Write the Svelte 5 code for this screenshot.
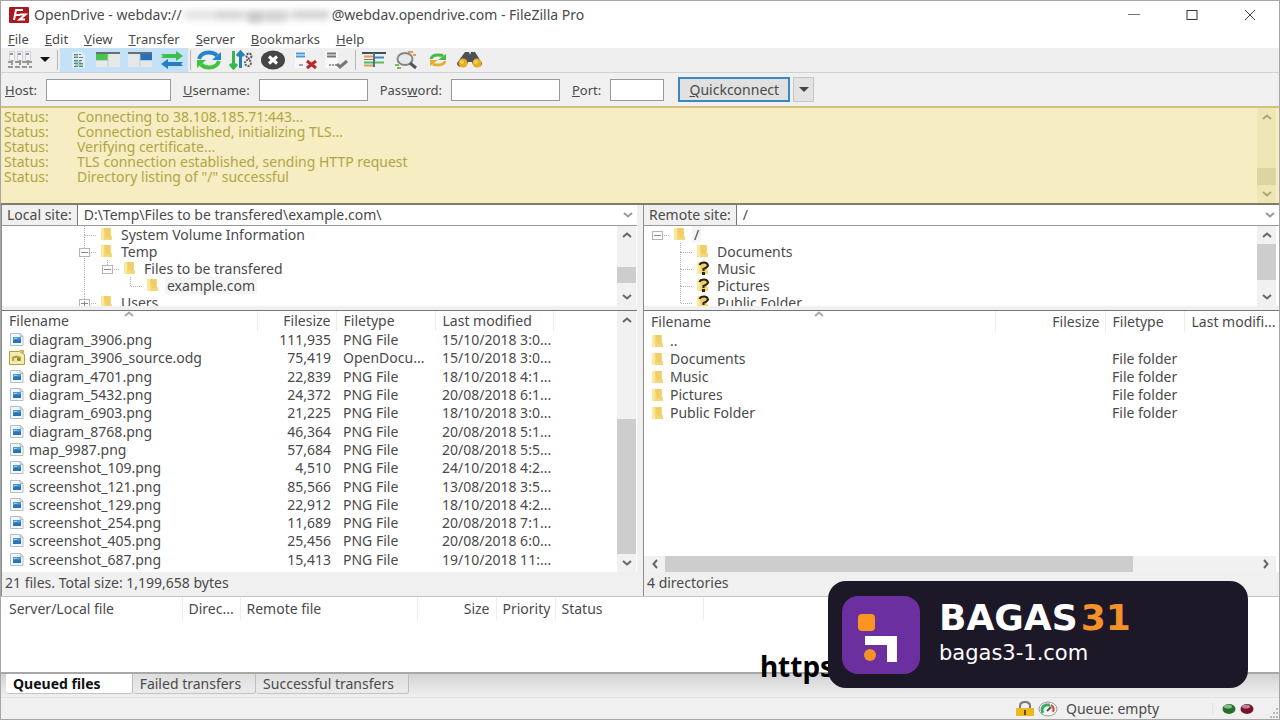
<script>
  const menus = ['File', 'Edit', 'View', 'Transfer', 'Server', 'Bookmarks', 'Help'];

  const log = [
    'Connecting to 38.108.185.71:443...',
    'Connection established, initializing TLS...',
    'Verifying certificate...',
    'TLS connection established, sending HTTP request',
    'Directory listing of "/" successful'
  ];

  // open: '-' expanded, '+' collapsed; up/down: connector line above/below the row
  const localTree = [
    { name: 'System Volume Information', depth: 0, up: true, down: true },
    { name: 'Temp', depth: 0, open: '-', up: true, down: true },
    { name: 'Files to be transfered', depth: 1, open: '-', up: true, parent: true },
    { name: 'example.com', depth: 2, up: true, parent: true, selected: true },
    { name: 'Users', depth: 0, open: '+', up: true }
  ];

  const remoteTree = [
    { name: '/', depth: 0, open: '-', selected: true },
    { name: 'Documents', depth: 1, up: true, down: true },
    { name: 'Music', depth: 1, up: true, down: true, unknown: true },
    { name: 'Pictures', depth: 1, up: true, down: true, unknown: true },
    { name: 'Public Folder', depth: 1, up: true, unknown: true }
  ];

  const localFiles = [
    ['diagram_3906.png', '111,935', 'PNG File', '15/10/2018 3:0...'],
    ['diagram_3906_source.odg', '75,419', 'OpenDocu...', '15/10/2018 3:0...'],
    ['diagram_4701.png', '22,839', 'PNG File', '18/10/2018 4:1...'],
    ['diagram_5432.png', '24,372', 'PNG File', '20/08/2018 6:1...'],
    ['diagram_6903.png', '21,225', 'PNG File', '18/10/2018 3:0...'],
    ['diagram_8768.png', '46,364', 'PNG File', '20/08/2018 5:1...'],
    ['map_9987.png', '57,684', 'PNG File', '20/08/2018 5:5...'],
    ['screenshot_109.png', '4,510', 'PNG File', '24/10/2018 4:2...'],
    ['screenshot_121.png', '85,566', 'PNG File', '13/08/2018 3:5...'],
    ['screenshot_129.png', '22,912', 'PNG File', '18/10/2018 4:2...'],
    ['screenshot_254.png', '11,689', 'PNG File', '20/08/2018 7:1...'],
    ['screenshot_405.png', '25,456', 'PNG File', '20/08/2018 6:0...'],
    ['screenshot_687.png', '15,413', 'PNG File', '19/10/2018 11:...']
  ];

  const remoteFiles = ['..', 'Documents', 'Music', 'Pictures', 'Public Folder'];
  const tabs = ['Queued files', 'Failed transfers', 'Successful transfers'];

  let activeTab = $state('Queued files');
  let host = $state('');
  let username = $state('');
  let password = $state('');
  let port = $state('');
</script>

{#snippet chevron(dir)}
  <svg class="chevron {dir}" width="12" height="12" viewBox="0 0 12 12" aria-hidden="true">
    <path d="M2 8 L6 4.500 L10 8" fill="none" stroke="currentColor" stroke-width="2" />
  </svg>
{/snippet}

{#snippet scrollbar(before, thumb, after, horizontal = false)}
  <div class="scrollbar" class:horizontal>
    <button type="button" aria-label="Scroll back">{@render chevron(horizontal ? 'left' : 'up')}</button>
    <span style:flex-grow={before}></span>
    <span class="thumb" style:flex-grow={thumb}></span>
    <span style:flex-grow={after}></span>
    <button type="button" aria-label="Scroll forward">{@render chevron(horizontal ? 'right' : 'down')}</button>
  </div>
{/snippet}

{#snippet folder(unknown = false)}
  <svg class="icon" width="13" height="15" viewBox="0 0 13 15" aria-hidden="true">
    <path d="M1 1h10v8l1 .5V13H1z" fill="#f3d877" />
    <path d="M4 1h6v9H6z" fill="#f0cd69" />
    <path d="M1 1h3v12H1z" fill="#fae7a0" />
    {#if unknown}
      <path d="M3.500 4Q4.500 1.500 8 1.500T12 4.500Q11.500 6.500 7.500 8V10" fill="none" stroke="#28240f" stroke-width="2" />
      <rect x="6" y="11" width="3" height="3" fill="#28240f" />
    {/if}
  </svg>
{/snippet}

{#snippet fileIcon(name)}
  {#if name.endsWith('.odg')}
    <svg class="icon" width="16" height="16" viewBox="0 0 16 16" aria-hidden="true">
      <path d="M.5 1.500h10l5 3v10H.500z" fill="#f3ecb9" stroke="#b89a4c" />
      <path d="M10 0h5v5z" fill="#d4b94b" />
      <path d="M3 7q4-3 9 0v4H3z" fill="#b9a23d" />
      <path d="M5 12V8h3v4z" fill="#eee79b" />
      <circle cx="9.500" cy="9" r="1.500" fill="#7f8a32" />
    </svg>
  {:else}
    <svg class="icon" width="16" height="16" viewBox="0 0 16 16" aria-hidden="true">
      <path d="M1.500 1.500h10l2.500 2.500v9.500H1.500z" fill="#f2f7fb" stroke="#b4bec8" />
      <path d="M11 1.500V4.500h3" fill="#dce3e9" stroke="#b4bec8" />
      <rect x="4" y="5" width="8" height="6" fill="#4a9ad8" />
      <path d="M4 9l3-2 2 1 3-1v4H4z" fill="#2b73b3" />
      <path d="M5 6h3v1H5z" fill="#9dd4f6" />
    </svg>
  {/if}
{/snippet}

{#snippet tree(rows)}
  <ul class="tree">
    {#each rows as row}
      <li style:padding-left="{row.depth * 23}px">
        <svg class="guide" width="24" height="17" viewBox="0 0 24 17" aria-hidden="true">
          <g stroke="#b4b4b4" stroke-dasharray="1 1">
            {#if row.up}<path d="M8.500 0V9" />{/if}
            {#if row.down}<path d="M8.500 9V17" />{/if}
            {#if row.parent}<path d="M{8.5 - row.depth * 23} 0V17" />{/if}
            <path d="M9 9.500H21" />
          </g>
          {#if row.open}
            <rect x="3.500" y="5.500" width="10" height="8" fill="#fff" stroke="#b4b4b4" />
            <path d="M5 9.500h7" stroke="#88888f" />
            {#if row.open === '+'}<path d="M8.500 7v5" stroke="#88888f" />{/if}
          {/if}
        </svg>
        {@render folder(row.unknown)}
        <span class="node" class:selected={row.selected}>{row.name}</span>
      </li>
    {/each}
  </ul>
{/snippet}

<div class="window">
  <header class="titlebar">
    <svg width="20" height="16" viewBox="0 0 20 16" aria-hidden="true">
      <rect width="20" height="16" rx="1" fill="#a9191f" />
      <path d="M5 13L7 3h7M6 8h5" fill="none" stroke="#fff" stroke-width="2" />
      <path d="M10.500 7.500h6l-6 5h5.500" fill="none" stroke="#fff" stroke-width="2" />
    </svg>
    <h1>
      OpenDrive - webdav://<svg class="redacted" width="150" height="18" viewBox="0 0 150 18" aria-hidden="true">
        <g fill="#c4c4c4">
          <rect x="2" y="4" width="146" height="10" opacity=".45" />
          <rect x="34" y="5" width="26" height="9" opacity=".4" />
          <rect x="66" y="5" width="14" height="12" opacity=".9" />
          <rect x="82" y="5" width="22" height="11" opacity=".6" />
          <rect x="112" y="4" width="34" height="9" opacity=".5" />
        </g>
      </svg>@webdav.opendrive.com - FileZilla Pro
    </h1>
    <div class="controls">
      <button type="button" aria-label="Minimize">
        <svg width="14" height="14" viewBox="0 0 14 14"><path d="M1 6.500h12" stroke="#777" /></svg>
      </button>
      <button type="button" aria-label="Maximize">
        <svg width="14" height="14" viewBox="0 0 14 14"><rect x="2" y="2.500" width="10" height="9" fill="none" stroke="#333" /></svg>
      </button>
      <button type="button" aria-label="Close">
        <svg width="14" height="14" viewBox="0 0 14 14"><path d="M2 2l10 10M12 2L2 12" stroke="#444" /></svg>
      </button>
    </div>
  </header>

  <nav class="menubar">
    {#each menus as menu}
      <button type="button"><u>{menu[0]}</u>{menu.slice(1)}</button>
    {/each}
  </nav>

  <div class="toolbar">
    <button type="button" class="wide" aria-label="Site Manager">
      <svg width="26" height="20" viewBox="0 0 26 20">
        <g fill="#f4f4f4" stroke="#cfcfcf">
          <path d="M2.500 1.500h5v9h-5zM10.500 1.500h5v9h-5zM18.500 1.500h5v9h-5z" />
        </g>
        <path d="M3 4h3M11 4h3M19 4h3" stroke="#8290c8" stroke-width="2" />
        <path d="M5 10v6M13 10v6M21 10v6M1 12h24M1 17h24" stroke="#979797" stroke-width="2" stroke-dasharray="5 2" />
      </svg>
    </button>
    <button type="button" class="drop" aria-label="Recent sites">
      <svg width="10" height="6" viewBox="0 0 10 6"><path d="M0 0h10L5 5z" fill="#111" /></svg>
    </button>
    <span class="separator"></span>
    <button type="button" class="pressed" aria-label="Toggle message log">
      <svg width="26" height="20" viewBox="0 0 26 20">
        <path d="M9 2h10l3 3v13H9z" fill="#dfeef3" />
        <path d="M11 4.500h7M11 7.500h10M11 10.500h8M11 13.500h10M11 16.500h9" stroke="#607f91" stroke-dasharray="4 1" />
        <path d="M11 6h4M11 12h7M12 15h8" stroke="#58a46c" />
      </svg>
    </button>
    <button type="button" class="pressed" aria-label="Toggle local tree">
      <svg width="26" height="20" viewBox="0 0 26 20">
        <rect x="1" y="2" width="24" height="15" fill="#e7e9e7" />
        <path d="M1 3h24" stroke="#667079" stroke-width="2" />
        <rect x="1" y="4" width="12" height="6" fill="#47c64b" />
        <path d="M13 5v12M1 10.500h12" stroke="#bfcbd1" />
      </svg>
    </button>
    <button type="button" class="pressed" aria-label="Toggle remote tree">
      <svg width="26" height="20" viewBox="0 0 26 20">
        <rect x="1" y="2" width="24" height="15" fill="#e5e8eb" />
        <path d="M1 3h24" stroke="#667079" stroke-width="2" />
        <rect x="13" y="4" width="12" height="6" fill="#2273b9" />
        <path d="M13 5v12M13 10.500h12" stroke="#bfcbd1" />
      </svg>
    </button>
    <button type="button" class="pressed" aria-label="Toggle transfer queue">
      <svg width="26" height="20" viewBox="0 0 26 20">
        <path d="M2 4h15V1l7 5-7 5V8H2l2-2z" fill="#3abf4a" />
        <path d="M24 12H9V9l-7 5 7 5v-3h15l-2-2z" fill="#237fc5" />
      </svg>
    </button>
    <span class="separator"></span>
    <button type="button" aria-label="Refresh">
      <svg width="26" height="20" viewBox="0 0 26 20">
        <path d="M3 9Q5 2.500 13 2.500q5 0 8 3" fill="none" stroke="#2383cb" stroke-width="4" />
        <path d="M25 2v8h-9z" fill="#2383cb" />
        <path d="M23 11q-2 6.500-10 6.500-5 0-8-3" fill="none" stroke="#3fc43d" stroke-width="4" />
        <path d="M1 18v-8h9z" fill="#3fc43d" />
      </svg>
    </button>
    <button type="button" aria-label="Process queue">
      <svg width="26" height="20" viewBox="0 0 26 20">
        <path d="M5.500 1v17M2 14l3.500 4 3.500-4" fill="none" stroke="#36b84a" stroke-width="3" />
        <path d="M12.500 18V2M9 6l3.500-4 3.500 4" fill="none" stroke="#297fb8" stroke-width="3" />
        <circle cx="21" cy="6" r="2.500" fill="none" stroke="#555" stroke-width="2" stroke-dasharray="2 1" />
        <circle cx="20" cy="13" r="3" fill="none" stroke="#666" stroke-width="2" stroke-dasharray="2 1" />
      </svg>
    </button>
    <button type="button" aria-label="Cancel operation">
      <svg width="26" height="20" viewBox="0 0 26 20">
        <ellipse cx="13" cy="10" rx="12" ry="9.500" fill="#454545" />
        <path d="M9 6.500l8 7M17 6.500l-8 7" stroke="#fff" stroke-width="3" />
      </svg>
    </button>
    <button type="button" aria-label="Disconnect">
      <svg width="26" height="20" viewBox="0 0 26 20">
        <path d="M3 1h11v17H3z" fill="#f8f8fa" />
        <path d="M4 3.500h9M4 6.500h9" stroke="#4b9bd2" stroke-width="2" />
        <path d="M7 15h4" stroke="#89aac1" stroke-width="2" />
        <path d="M15 11l9 7M24 11l-9 7" stroke="#ba2929" stroke-width="3" />
      </svg>
    </button>
    <button type="button" aria-label="Reconnect">
      <svg width="26" height="20" viewBox="0 0 26 20">
        <path d="M1 1h13v17H1z" fill="#f8f8f8" />
        <path d="M3 3.500h9M3 6.500h9" stroke="#777" stroke-width="2" />
        <path d="M5 15h8" stroke="#999" stroke-width="2" stroke-dasharray="2 1" />
        <path d="M13 14l3 3 7-6" fill="none" stroke="#777" stroke-width="3" />
      </svg>
    </button>
    <span class="separator"></span>
    <button type="button" aria-label="Filename filters">
      <svg width="26" height="20" viewBox="0 0 26 20">
        <path d="M1 3h24" stroke="#3e4f5d" stroke-width="2" />
        <path d="M3 6.500h9M3 15.500h9" stroke="#d1a353" stroke-width="2" />
        <path d="M3 9.500h9" stroke="#c65d55" />
        <path d="M3 12.500h9" stroke="#4abf5d" stroke-width="2" />
        <path d="M13 3v14" stroke="#4d7388" stroke-width="2" />
        <path d="M14 7.500h9" stroke="#4587b8" stroke-width="2" />
        <path d="M14 12.500h9" stroke="#59bd5a" stroke-width="2" />
      </svg>
    </button>
    <button type="button" aria-label="Directory comparison">
      <svg width="26" height="20" viewBox="0 0 26 20">
        <path d="M15 2h5M20 5h3" stroke="#e09e55" stroke-width="2" />
        <path d="M2 15h4M4 18h4" stroke="#79b95c" stroke-width="2" />
        <ellipse cx="12" cy="9" rx="7.500" ry="6" fill="#e6e9eb" stroke="#858585" stroke-width="2" />
        <path d="M17 13l6 5" stroke="#555" stroke-width="3" />
      </svg>
    </button>
    <button type="button" aria-label="Synchronized browsing">
      <svg width="26" height="20" viewBox="0 0 26 20">
        <path d="M6 9q1-4 7-4 4 0 5 1" fill="none" stroke="#48b84b" stroke-width="3" />
        <path d="M21 4v6h-8z" fill="#48b84b" />
        <path d="M20 11q-1 4-7 4-4 0-5-1" fill="none" stroke="#e9ad2c" stroke-width="3" />
        <path d="M5 16v-6h8z" fill="#e9ad2c" />
      </svg>
    </button>
    <button type="button" aria-label="Search files">
      <svg width="26" height="20" viewBox="0 0 26 20">
        <path d="M8 2h4l1 3 1-3h4l7 11q0 4-5 4-4 0-5-5h-4q-1 5-6 5-5 0-5-4z" fill="#4d5054" />
        <circle cx="6" cy="13" r="4.500" fill="#e9ad22" />
        <circle cx="20" cy="13" r="4.500" fill="#e9ad22" />
        <circle cx="5" cy="12" r="2" fill="#f4ce59" />
        <circle cx="19" cy="12" r="2" fill="#f4ce59" />
      </svg>
    </button>
  </div>

  <form class="quickbar" onsubmit={(e) => e.preventDefault()}>
    <label for="host"><u>H</u>ost:</label>
    <input id="host" class="host" type="text" bind:value={host} />
    <label for="username"><u>U</u>sername:</label>
    <input id="username" type="text" bind:value={username} />
    <label for="password">Pass<u>w</u>ord:</label>
    <input id="password" type="password" bind:value={password} />
    <label for="port"><u>P</u>ort:</label>
    <input id="port" class="port" type="text" bind:value={port} />
    <button type="submit" class="connect"><u>Q</u>uickconnect</button>
    <button type="button" class="history" aria-label="Connection history">
      <svg width="10" height="6" viewBox="0 0 10 6"><path d="M0 0h10L5 5z" fill="#444" /></svg>
    </button>
  </form>

  <section class="log">
    <dl>
      {#each log as message}
        <dt>Status:</dt>
        <dd>{message}</dd>
      {/each}
    </dl>
    {@render scrollbar(40, 16, 0)}
  </section>

  <main class="panes">
    <section class="pane">
      <div class="sitebar">
        <label for="local-site">Local site:</label>
        <input id="local-site" type="text" value={'D:\\Temp\\Files to be transfered\\example.com\\'} />
        {@render chevron('down')}
      </div>
      <div class="treebox local">
        {@render tree(localTree)}
        {@render scrollbar(23, 16, 5)}
      </div>
      <div class="listbox">
        <div class="scroll">
          <table class="full">
            <colgroup><col class="c-name" /><col class="c-size" /><col class="c-type" /><col class="c-date" /><col /></colgroup>
            <thead>
              <tr>
                <th class="sorted">Filename {@render chevron('up')}</th>
                <th class="num">Filesize</th><th>Filetype</th><th>Last modified</th><th class="rest"></th>
              </tr>
            </thead>
            <tbody>
              {#each localFiles as [name, size, type, modified]}
                <tr>
                  <td class="file"><span>{@render fileIcon(name)}{name}</span></td>
                  <td class="num">{size}</td><td>{type}</td><td>{modified}</td><td></td>
                </tr>
              {/each}
            </tbody>
          </table>
        </div>
        {@render scrollbar(91, 136, 0)}
      </div>
      <p class="summary">21 files. Total size: 1,199,658 bytes</p>
    </section>

    <section class="pane">
      <div class="sitebar">
        <label for="remote-site">Remote site:</label>
        <input id="remote-site" type="text" value="/" />
        {@render chevron('down')}
      </div>
      <div class="treebox">
        {@render tree(remoteTree)}
        {@render scrollbar(0, 38, 8)}
      </div>
      <div class="listbox remote">
        <div class="scroll">
          <table>
            <colgroup><col /><col class="r-size" /><col class="r-type" /><col class="r-date" /></colgroup>
            <thead>
              <tr>
                <th class="sorted">Filename {@render chevron('up')}</th>
                <th class="num">Filesize</th><th>Filetype</th><th class="rest">Last modifi...</th>
              </tr>
            </thead>
            <tbody>
              {#each remoteFiles as name}
                <tr>
                  <td class="file"><span>{@render folder()}{name}</span></td>
                  <td></td><td>{name === '..' ? '' : 'File folder'}</td><td></td>
                </tr>
              {/each}
            </tbody>
          </table>
        </div>
        {@render scrollbar(0, 468, 122, true)}
      </div>
      <p class="summary">4 directories</p>
    </section>
  </main>

  <section class="queue">
    <table>
      <colgroup><col class="q-local" /><col class="q-dir" /><col class="q-remote" /><col class="q-size" /><col class="q-prio" /><col class="q-status" /><col /></colgroup>
      <thead>
        <tr>
          <th>Server/Local file</th><th>Direc...</th><th>Remote file</th>
          <th class="num">Size</th><th>Priority</th><th>Status</th><th class="rest"></th>
        </tr>
      </thead>
    </table>
  </section>

  <div class="tabs">
    {#each tabs as tab}
      <button type="button" class:active={activeTab === tab} onclick={() => (activeTab = tab)}>{tab}</button>
    {/each}
  </div>

  <footer class="statusbar">
    <svg width="20" height="18" viewBox="0 0 20 18" aria-hidden="true">
      <path d="M5 9V6q0-4 5-4t5 4v3" fill="none" stroke="#777" stroke-width="2" />
      <rect x="1" y="8" width="18" height="8" fill="#eeb91f" />
      <path d="M10 10v5" stroke="#5d4a14" stroke-width="2" />
    </svg>
    <svg width="20" height="18" viewBox="0 0 20 18" aria-hidden="true">
      <ellipse cx="10" cy="9" rx="9" ry="7" fill="#f3f5f3" stroke="#999" />
      <path d="M5 13Q2 7 8 5l4 0" fill="none" stroke="#3cae62" stroke-width="3" />
      <path d="M13 5q4 3 2 7" fill="none" stroke="#c8473c" stroke-width="2" />
      <path d="M9 11l4-4" stroke="#555" stroke-width="2" />
    </svg>
    <span class="queue-state">Queue: empty</span>
    <span class="leds">
      <svg width="14" height="12" viewBox="0 0 14 12" aria-hidden="true">
        <ellipse cx="7" cy="6" rx="6.500" ry="5" fill="#24702b" /><ellipse cx="6" cy="3.500" rx="4" ry="2" fill="#8bbb8d" />
      </svg>
      <svg width="14" height="12" viewBox="0 0 14 12" aria-hidden="true">
        <ellipse cx="7" cy="6" rx="6.500" ry="5" fill="#74152c" /><ellipse cx="6" cy="3.500" rx="4" ry="2" fill="#bb8290" />
      </svg>
    </span>
    <svg class="grip" width="12" height="12" viewBox="0 0 12 12" aria-hidden="true">
      <path d="M9 2h2M6 6h2M9 6h2M3 10h2M6 10h2M9 10h2" stroke="#b9b9b9" stroke-width="2" />
    </svg>
  </footer>

  <span class="link">https:</span>
  <aside class="badge">
    <svg width="78" height="78" viewBox="0 0 78 78" aria-hidden="true">
      <rect width="78" height="78" rx="16" fill="#6b2fa0" />
      <rect x="16" y="18" width="17" height="17" rx="4" fill="#fb9420" />
      <path d="M23 40h32v26H45V49H23z" fill="#fff" />
      <circle cx="28" cy="59" r="6" fill="#f3922a" />
    </svg>
    <div>
      <strong>BAGAS<b>31</b></strong>
      <span>bagas3-1.com</span>
    </div>
  </aside>
</div>

<style>
  :global(body) {
    margin: 0;
  }

  .window {
    position: relative;
    display: flex;
    flex-direction: column;
    box-sizing: border-box;
    min-height: 100vh;
    border: 1px solid #a6a6a6;
    background: #f0f0f0;
    color: #4a4a4a;
    font-family: "Noto Sans", "Open Sans", sans-serif;
    font-size: 14px;
    line-height: 18px;
    overflow: hidden;
  }

  button,
  input {
    font: inherit;
    color: inherit;
  }

  button {
    display: flex;
    align-items: center;
    justify-content: center;
    padding: 0;
    border: 0;
    background: none;
  }

  svg {
    flex-shrink: 0;
  }

  .titlebar {
    display: flex;
    align-items: center;
    height: 28px;
    padding-left: 8px;
    gap: 5px;
    background: #fff;
  }

  h1 {
    display: flex;
    align-items: center;
    flex: 1;
    margin: 0;
    font-size: 14px;
    font-weight: 400;
    white-space: nowrap;
  }

  .redacted {
    filter: blur(3px);
  }

  .controls {
    display: flex;
  }

  .controls button {
    width: 58px;
    height: 28px;
  }

  .menubar {
    display: flex;
    height: 19px;
    gap: 16px;
    padding-left: 7px;
    background: #fff;
    font-size: 13px;
  }

  .toolbar {
    display: flex;
    align-items: center;
    height: 24px;
    padding-left: 5px;
    border-bottom: 1px solid #d2d2d2;
    background: #efefef;
  }

  .toolbar button {
    width: 32px;
    height: 24px;
  }

  .toolbar .wide {
    width: 28px;
  }

  .toolbar .drop {
    width: 21px;
  }

  .toolbar .pressed {
    background: #c5e1f7;
  }

  .separator {
    width: 1px;
    height: 20px;
    margin: 0 2px;
    background: #b5b5b5;
  }

  .quickbar {
    display: flex;
    align-items: center;
    height: 33px;
    padding-left: 4px;
    border-bottom: 2px solid #d3c17f;
  }

  .quickbar label {
    margin-right: 9px;
    font-size: 13px;
  }

  .quickbar input {
    box-sizing: border-box;
    width: 109px;
    height: 22px;
    margin-right: 12px;
    border: 1px solid #999;
    background: #fff;
  }

  .quickbar .host {
    width: 125px;
  }

  .quickbar .port {
    width: 54px;
    margin-right: 14px;
  }

  .connect {
    width: 112px;
    height: 25px;
    border: 2px solid #3a87c4;
    background: #e1e1e1;
  }

  .history {
    width: 21px;
    height: 25px;
    margin-left: 3px;
    border: 1px solid #c6c6c6;
    background: #e3e3e3;
  }

  .log {
    display: flex;
    height: 95px;
    padding-right: 3px;
    background: #f6edc2;
    border-bottom: 2px solid #85786c;
    color: #b0a544;
  }

  .log dl {
    display: grid;
    grid-template-columns: 73px 1fr;
    align-content: start;
    flex: 1;
    margin: 0;
    padding: 1px 0 0 3px;
    line-height: 15px;
  }

  .log dd {
    margin: 0;
  }

  .log .scrollbar {
    background: #eee7b5;
    color: #aea476;
  }

  .log .thumb {
    background: #ddd5a0;
  }

  .chevron {
    display: block;
  }

  .chevron.down {
    transform: rotate(180deg);
  }

  .chevron.left {
    transform: rotate(270deg);
  }

  .chevron.right {
    transform: rotate(90deg);
  }

  .scrollbar {
    display: flex;
    flex-direction: column;
    flex-shrink: 0;
    width: 19px;
    background: #f1f1f1;
    color: #666;
  }

  .scrollbar button {
    flex: 0 0 18px;
  }

  .scrollbar.horizontal {
    flex-direction: row;
    width: auto;
    height: 16px;
  }

  .scrollbar.horizontal button {
    flex-basis: 21px;
  }

  .thumb {
    background: #cdcdcd;
  }

  .panes {
    display: grid;
    grid-template-columns: 1fr 1fr;
    gap: 6px;
    flex: 1;
  }

  .pane {
    display: flex;
    flex-direction: column;
    min-width: 0;
    border-left: 1px solid #8c8c8c;
  }

  .sitebar {
    display: flex;
    align-items: center;
    height: 20px;
    padding-right: 3px;
    border-bottom: 1px solid #999;
    background: #fff;
  }

  .sitebar label {
    padding: 0 5px;
    line-height: 20px;
    border-right: 1px solid #777;
    background: #f0f0f0;
  }

  .sitebar input {
    flex: 1;
    min-width: 0;
    padding: 0 6px;
    border: 0;
    background: none;
  }

  .sitebar .chevron {
    color: #999;
  }

  .treebox {
    display: flex;
    height: 80px;
    padding-right: 3px;
    overflow: hidden;
    background: #fff;
  }

  .pane:first-child .treebox,
  .pane:first-child .listbox {
    padding-right: 1px;
  }

  .tree {
    flex: 1;
    margin: 0;
    padding: 0 0 0 5px;
    list-style: none;
    overflow: hidden;
  }

  .local .tree {
    padding-left: 74px;
  }

  .tree li {
    display: flex;
    align-items: center;
    height: 17px;
    line-height: 17px;
  }

  .guide {
    overflow: visible;
  }

  .node {
    margin-left: 6px;
    padding: 0 2px;
  }

  .node.selected {
    background: #f5f5f5;
  }

  .listbox {
    display: flex;
    flex: 1;
    margin-top: 4px;
    padding-right: 3px;
    border-top: 1px solid #777;
    background: #fff;
  }

  .listbox.remote {
    flex-direction: column;
  }

  .scroll {
    display: flex;
    flex: 1;
    align-items: flex-start;
    min-width: 0;
    padding-bottom: 3px;
  }

  table {
    width: 100%;
    table-layout: fixed;
    border-collapse: collapse;
    white-space: nowrap;
  }

  .full {
    align-self: stretch;
  }

  th,
  td {
    padding: 0 7px;
    text-align: left;
    font-weight: 400;
    overflow: hidden;
  }

  th {
    height: 21px;
    border-right: 1px solid #ededed;
  }

  .full th {
    height: 20px;
  }

  th.rest {
    border-right: 0;
  }

  td {
    height: 18px;
  }

  .num {
    padding-right: 5px;
    text-align: right;
  }

  .sorted {
    position: relative;
  }

  .sorted .chevron {
    position: absolute;
    top: -3px;
    left: calc(50% - 6px);
    color: #aaa;
  }

  .file span {
    display: flex;
    align-items: center;
    gap: 4px;
  }

  .remote .file span {
    gap: 6px;
  }

  .c-name {
    width: 255px;
  }

  .c-size {
    width: 79px;
  }

  .c-type {
    width: 99px;
  }

  .c-date {
    width: 118px;
  }

  .r-size {
    width: 110px;
  }

  .r-type {
    width: 79px;
  }

  .r-date {
    width: 92px;
  }

  .summary {
    margin: 0;
    padding: 2px 3px 4px;
  }

  .queue {
    height: 75px;
    border-top: 1px solid #c3c3c3;
    border-bottom: 2px solid #a8a8a8;
    background: #fff;
  }

  .queue th {
    height: 23px;
    padding: 0 6px;
  }

  .queue th:first-child {
    padding-left: 8px;
  }

  .q-local {
    width: 181px;
  }

  .q-dir {
    width: 58px;
  }

  .q-remote {
    width: 177px;
  }

  .q-size {
    width: 79px;
  }

  .q-prio {
    width: 59px;
  }

  .q-status {
    width: 148px;
  }

  .tabs {
    display: flex;
    height: 23px;
    padding-left: 5px;
    background: linear-gradient(#d3d3d3, #f0f0f0);
  }

  .tabs button {
    height: 20px;
    padding: 0 14px 0 7px;
    border-right: 1px solid #bdbdbd;
    border-bottom: 1px solid #c4c4c4;
    border-radius: 0 0 3px 3px;
    background: linear-gradient(#dedede, #ebebeb);
    font-size: 14px;
  }

  .tabs .active {
    padding-right: 31px;
    background: #fff;
    color: #111;
    font-weight: 700;
  }

  .statusbar {
    display: flex;
    align-items: center;
    justify-content: flex-end;
    height: 21px;
    gap: 3px;
    border-top: 1px solid #e2e2e2;
  }

  .queue-state {
    width: 143px;
    margin-left: 5px;
  }

  .leds {
    display: flex;
    gap: 4px;
    padding: 0 10px 0 9px;
    border-left: 1px solid #e2e2e2;
  }

  .grip {
    align-self: flex-end;
  }

  .link {
    position: absolute;
    right: 437px;
    bottom: 34px;
    color: #000;
    font-size: 28px;
    font-weight: 700;
    line-height: 38px;
  }

  .badge {
    position: absolute;
    right: 31px;
    bottom: 31px;
    display: flex;
    align-items: center;
    box-sizing: border-box;
    width: 420px;
    height: 107px;
    gap: 19px;
    padding-left: 14px;
    border-radius: 18px;
    background: #1d1828;
    color: #fff;
    font-family: "DejaVu Sans", sans-serif;
  }

  .badge div {
    padding-bottom: 3px;
  }

  .badge strong {
    display: flex;
    gap: 3px;
    font-size: 36px;
    line-height: 40px;
  }

  .badge b {
    color: #f3922a;
  }

  .badge span {
    display: block;
    font-size: 21px;
    line-height: 30px;
  }
</style>
